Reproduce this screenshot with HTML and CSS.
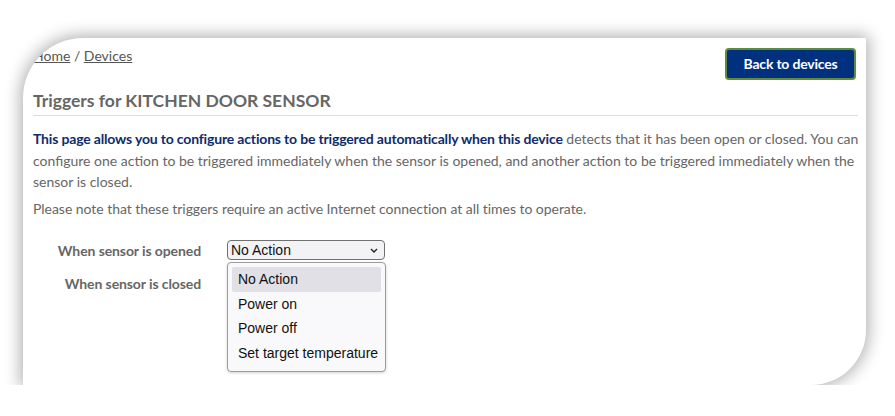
FILE: index.html
```html
<!DOCTYPE html>
<html lang="en">
<head>
<meta charset="utf-8">
<title>Triggers for KITCHEN DOOR SENSOR</title>
<link rel="stylesheet" href="styles.css">
</head>
<body>
<div class="stage">
  <div class="card">
    <div class="topbar">
      <div class="crumbs"><a href="#">Home</a> / <a href="#">Devices</a></div>
      <a class="btn" href="#">Back to devices</a>
    </div>
    <h2 class="title">Triggers for KITCHEN DOOR SENSOR</h2>
    <p class="lead"><strong>This page allows you to configure actions to be triggered automatically when this device</strong> detects that it has been open or closed. You can configure one action to be triggered immediately when the sensor is opened, and another action to be triggered immediately when the sensor is closed.</p>
    <p class="note">Please note that these triggers require an active Internet connection at all times to operate.</p>
    <div class="form">
      <div class="label">When sensor is opened</div>
      <div class="field">
        <div class="select"><span>No Action</span><svg class="chev" width="8" height="5" viewBox="0 0 8 5"><path d="M1 1l3 3 3-3" fill="none" stroke="#222" stroke-width="1.4"/></svg></div>
        <div class="menu">
          <div class="opt active">No Action</div>
          <div class="opt">Power on</div>
          <div class="opt">Power off</div>
          <div class="opt">Set target temperature</div>
        </div>
      </div>
      <div class="label">When sensor is closed</div>
      <div class="field">
        <div class="select"><span>No Action</span><svg class="chev" width="8" height="5" viewBox="0 0 8 5"><path d="M1 1l3 3 3-3" fill="none" stroke="#222" stroke-width="1.4"/></svg></div>
      </div>
    </div>
  </div>
</div>
</body>
</html>
```

FILE: styles.css
```css
html, body {
  margin: 0;
  padding: 0;
  background: #ffffff;
}
body {
  font-family: Lato, "Open Sans", sans-serif;
  font-size: 14px;
  color: #666;
}
.stage {
  padding: 38px 29px 0 23px;
}
.card {
  width: 843px;
  height: 347px;
  box-sizing: border-box;
  background: #fff;
  border-radius: 60px 0 55px 0;
  box-shadow: 0 0 16px 3px rgba(0, 0, 0, 0.3);
  overflow: hidden;
  padding: 10px 7px 0 10px;
}
.topbar {
  display: flex;
  justify-content: space-between;
  align-items: flex-start;
}
.crumbs {
  line-height: 16px;
  color: #555;
}
.crumbs a {
  color: #555;
  text-decoration: underline;
}
.btn {
  display: block;
  width: 131px;
  height: 32px;
  margin-right: 3px;
  box-sizing: border-box;
  background: #01307f;
  border: 2px solid #5d8c3c;
  border-radius: 4px;
  color: #fff;
  font-weight: 700;
  font-size: 14px;
  line-height: 27px;
  text-align: center;
  text-decoration: none;
  letter-spacing: -0.2px;
}
.title {
  margin: 9px 1px 0 0;
  font-size: 17.5px;
  font-weight: 700;
  line-height: 24px;
  padding-bottom: 2px;
  border-bottom: 1px solid #ddd;
  color: #666;
}
.lead, .note {
  margin: 12px 0 0 0;
  line-height: 21.5px;
  letter-spacing: 0;
}
.note {
  margin-top: 5px;
  letter-spacing: -0.04px;
}
.lead strong {
  color: #0d2c6c;
  font-weight: 700;
  letter-spacing: -0.17px;
}
.form {
  display: grid;
  grid-template-columns: 168px 158px;
  column-gap: 26px;
  row-gap: 13px;
  margin-top: 21px;
  align-items: center;
}
.label {
  text-align: right;
  font-weight: 700;
  letter-spacing: -0.1px;
}
.field {
  position: relative;
}
.select {
  height: 20px;
  box-sizing: border-box;
  border: 1px solid #707070;
  border-radius: 4px;
  background: #f3f3f5;
  display: flex;
  align-items: center;
  justify-content: space-between;
  padding: 0 6px 0 3px;
  font-family: "Liberation Sans", Arial, sans-serif;
  font-size: 14px;
  color: #111;
}
.menu {
  position: absolute;
  left: 0;
  top: 22px;
  width: 159px;
  box-sizing: border-box;
  background: #f9f9fb;
  border: 1px solid #9c9c9c;
  border-radius: 4px;
  box-shadow: 0 1px 3px rgba(0, 0, 0, 0.18);
  padding: 4px 4px 6px 4px;
  font-family: "Liberation Sans", Arial, sans-serif;
  font-size: 14px;
  color: #111;
  z-index: 2;
}
.opt {
  height: 24.5px;
  line-height: 24.5px;
  padding-left: 6px;
  border-radius: 2px;
}
.opt.active {
  background: #e0e0e6;
}
```
